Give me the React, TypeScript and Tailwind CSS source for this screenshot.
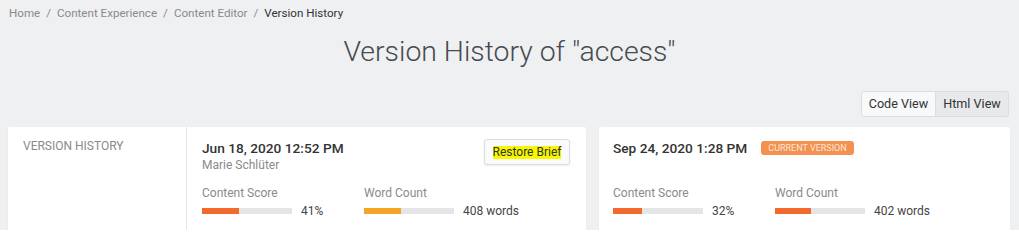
import React from "react";

function Bar({ pct, color }: { pct: number; color: string }) {
  return (
    <div className="w-[90px] h-[6px] bg-[#e4e5e7]">
      <div className={`h-full ${color}`} style={{ width: `${pct}%` }} />
    </div>
  );
}

function Stat({ label, pct, color, value }: { label: string; pct: number; color: string; value: string }) {
  return (
    <div className="w-[162px]">
      <div className="text-[12px] leading-[16px] text-[#8a8a8a]">{label}</div>
      <div className="mt-[3px] flex items-center h-[14px]">
        <Bar pct={pct} color={color} />
        <span className="ml-[9px] text-[12px] leading-[14px] text-[#444]">{value}</span>
      </div>
    </div>
  );
}

export default function App() {
  return (
    <div
      className="w-[1019px] h-[230px] overflow-hidden bg-[#eff0f2]"
      style={{ fontFamily: "Roboto, 'Liberation Sans', sans-serif" }}
    >
      <div className="h-[28px] flex items-center pl-[9px] text-[11.6px] text-[#8a8a8a]">
        <span>Home</span>
        <span className="mx-[6px]">/</span>
        <span>Content Experience</span>
        <span className="mx-[6px]">/</span>
        <span>Content Editor</span>
        <span className="mx-[6px]">/</span>
        <span className="text-[#333]">Version History</span>
      </div>
      <div className="h-[48px] flex items-center justify-center text-[28.4px] font-light text-[#474a4f]">
        Version History of "access"
      </div>
      <div className="mt-[15px] flex justify-end pr-[10px]">
        <div className="flex h-[26px] border border-[#dcdde0] rounded-[3px] overflow-hidden text-[12.6px] text-[#333]">
          <div className="w-[74px] flex items-center justify-center bg-[#f8f9fa] border-r border-[#dcdde0]">Code View</div>
          <div className="w-[72px] flex items-center justify-center bg-[#e8e9eb]">Html View</div>
        </div>
      </div>
      <div className="mt-[10px] flex pl-[8px] pr-[9px] gap-[13px]">
        <div className="w-[578px] h-[130px] bg-white rounded-[2px] shadow-[0_1px_2px_rgba(0,0,0,0.06)] flex">
          <div className="w-[179px] border-r border-[#e6e7e9] pl-[15px] pt-[12px] text-[12px] leading-[14px] text-[#8a8a8a]">
            VERSION HISTORY
          </div>
          <div className="flex-1 pl-[15px] pr-[16px] pt-[12px]">
            <div className="flex justify-between h-[34px]">
              <div>
                <div className="text-[13.7px] leading-[18px] font-medium text-[#333]">Jun 18, 2020 12:52 PM</div>
                <div className="text-[12px] leading-[16px] text-[#8a8a8a]">Marie Schlüter</div>
              </div>
              <button className="h-[26px] w-[86px] border border-[#dcdde0] rounded-[3px] bg-[#f9fafb] shadow-[0_1px_2px_rgba(0,0,0,0.08)] flex items-center justify-center text-[12px] text-[#333]">
                <span className="bg-[#f7f700] leading-[13px]">Restore Brief</span>
              </button>
            </div>
            <div className="mt-[12px] flex">
              <Stat label="Content Score" pct={41} color="bg-[#f26a2e]" value="41%" />
              <Stat label="Word Count" pct={41} color="bg-[#f5a526]" value="408 words" />
            </div>
          </div>
        </div>
        <div className="flex-1 h-[130px] bg-white rounded-[2px] shadow-[0_1px_2px_rgba(0,0,0,0.06)] pl-[14px] pt-[12px]">
          <div className="h-[34px]">
            <div className="flex items-center h-[18px]">
              <span className="text-[13.7px] leading-[18px] font-medium text-[#333]">Sep 24, 2020 1:28 PM</span>
              <span className="ml-[14px] h-[14px] px-[7px] rounded-[3px] bg-[#f39151] text-[#fde7d6] text-[9px] leading-[14px] uppercase">
                Current Version
              </span>
            </div>
          </div>
          <div className="mt-[12px] flex">
            <Stat label="Content Score" pct={32} color="bg-[#f26a2e]" value="32%" />
            <Stat label="Word Count" pct={40} color="bg-[#f26a2e]" value="402 words" />
          </div>
        </div>
      </div>
    </div>
  );
}
